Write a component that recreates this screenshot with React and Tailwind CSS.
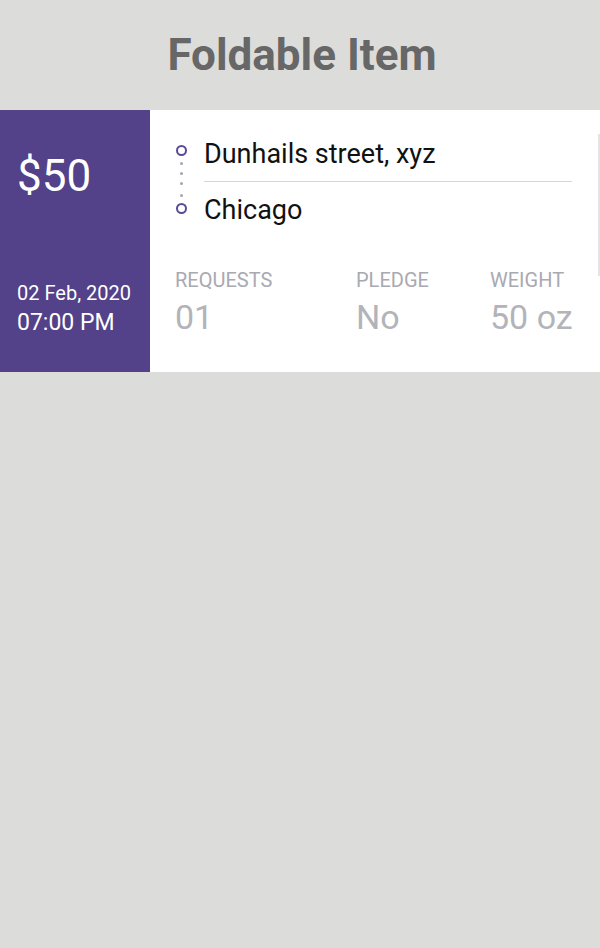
import React from 'react';

const stats = [
  { label: 'Requests', value: '01', width: 'w-[181px]' },
  { label: 'Pledge', value: 'No', width: 'w-[134px]' },
  { label: 'Weight', value: '50 oz', width: '' },
];

export default function App() {
  return (
    <div className="min-h-[948px] w-[600px] bg-[#dcdddb] font-['Roboto',sans-serif]">
      <h1 className="pt-[27px] pl-[4px] h-[110px] text-center text-[44px] leading-[56px] font-bold text-[#666766]">
        Foldable Item
      </h1>

      <div className="flex h-[262px]">
        <div className="w-[150px] shrink-0 bg-[#534189] text-white pl-[17px] flex flex-col">
          <div className="mt-[40px] text-[44px] leading-[52px]">$50</div>
          <div className="mt-auto mb-[33px]">
            <div className="text-[20px] leading-[26px]">02 Feb, 2020</div>
            <div className="text-[23px] leading-[32px] mt-[1px]">07:00 PM</div>
          </div>
        </div>

        <div className="flex-1 min-w-0 bg-white relative pl-[25px] pr-[28px]">
          <div className="absolute right-0 top-[24px] h-[142px] w-[2px] bg-[#e4e4e6]" />

          <div className="flex mt-[28px]">
            <div className="w-[12px] flex flex-col items-center pt-[7px] mr-[17px]">
              <span className="w-[11px] h-[11px] rounded-full border-2 border-[#5a4a95]" />
              <span className="w-[3px] h-[3px] rounded-full bg-[#a5a5b0] mt-[6px]" />
              <span className="w-[3px] h-[3px] rounded-full bg-[#a5a5b0] mt-[7px]" />
              <span className="w-[3px] h-[3px] rounded-full bg-[#a5a5b0] mt-[7px]" />
              <span className="w-[3px] h-[3px] rounded-full bg-[#a5a5b0] mt-[9px]" />
              <span className="w-[11px] h-[11px] rounded-full border-2 border-[#5a4a95] mt-[6px]" />
            </div>
            <div className="flex-1">
              <div className="text-[27px] leading-[32px] text-[#111] pb-[11px] border-b border-[#d6d6d8]">
                Dunhails street, xyz
              </div>
              <div className="text-[27px] leading-[32px] text-[#111] mt-[12px]">Chicago</div>
            </div>
          </div>

          <div className="flex mt-[42px]">
            {stats.map((s) => (
              <div key={s.label} className={`${s.width} shrink-0 whitespace-nowrap`}>
                <div className="uppercase text-[20px] leading-[24px] text-[#a9a9b1]">{s.label}</div>
                <div className="text-[34px] leading-[40px] text-[#b3b3ba] mt-[5px]">{s.value}</div>
              </div>
            ))}
          </div>
        </div>
      </div>
    </div>
  );
}
